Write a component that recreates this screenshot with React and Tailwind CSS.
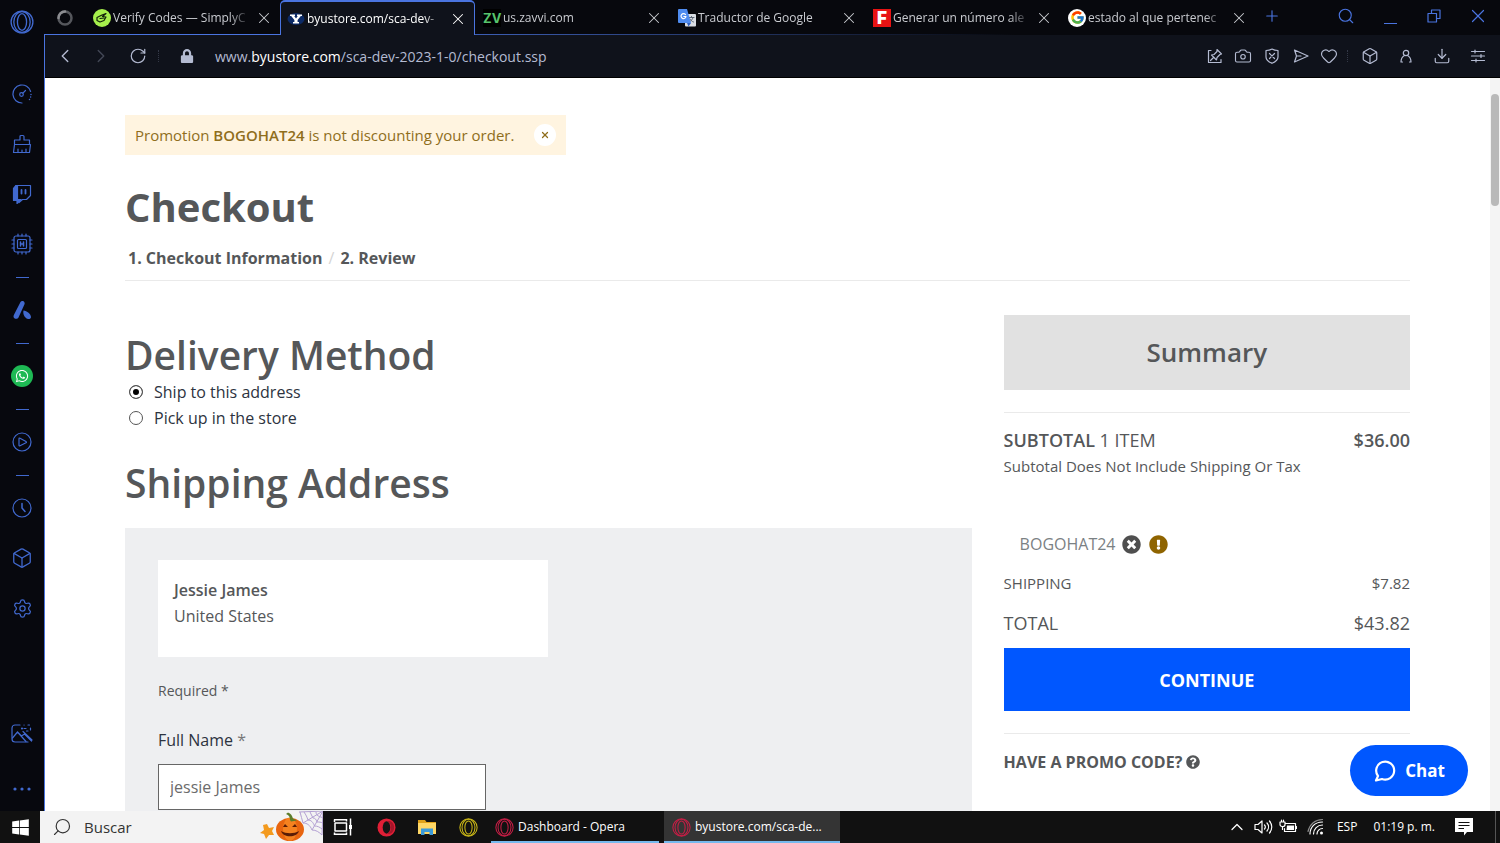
import { useState } from 'react'
import {
  Box, Camera, ChevronLeft, ChevronRight, ChevronUp, Download, Heart, Plus, RotateCw, Search, Settings, X,
} from 'lucide-react'
import { FaExclamationCircle, FaLock, FaQuestionCircle, FaTimesCircle, FaWhatsapp, FaWindows } from 'react-icons/fa'
import { FcGoogle } from 'react-icons/fc'

function Svg({ className = 'size-5', box = 20, children, ...rest }) {
  return (
    <svg
      className={className}
      viewBox={`0 0 ${box} ${box}`}
      fill="none"
      stroke="currentColor"
      strokeWidth="1.2"
      strokeLinecap="round"
      strokeLinejoin="round"
      aria-hidden="true"
      {...rest}
    >
      {children}
    </svg>
  )
}

function OperaRing({ className = 'size-[22px]' }) {
  return (
    <Svg className={className} box={22}>
      <circle cx="11" cy="11" r="10" />
      <ellipse cx="11" cy="11" rx="7.5" ry="9.6" />
      <ellipse cx="11" cy="11" rx="4.2" ry="7.6" />
    </Svg>
  )
}

function SpeedIcon() {
  return (
    <Svg>
      <path d="M10 19A9 9 0 1 1 18.6 7.5" />
      <path d="M19 10.5v.1M18.6 13v.1M17.5 15.4v.1" strokeWidth="1.5" />
      <circle cx="9.5" cy="10.5" r="1.8" />
      <path d="M10.9 9.2 13.5 6.5" />
    </Svg>
  )
}

function CleanerIcon() {
  return (
    <Svg>
      <path d="M8 6V2.5a1 1 0 0 1 1-1h2a1 1 0 0 1 1 1V6h5.5v4.5h-15V6zM2.5 10.5 1.5 18.5h16l1-8M6 18.5V15M10 18.5V16M14 18.5V15" />
    </Svg>
  )
}

function TwitchIcon() {
  return (
    <Svg>
      <path d="M4 1.5h14.5v10l-4 4h-4L7 18.5v-3H3.5V3z" />
      <path d="M4 1.5 1.5 4.5v12H5V19.5l4-4H5.500V1.500z" fill="currentColor" />
      <path d="M9.500 6v3.500M13.500 6v3.500" strokeWidth="1.8" />
    </Svg>
  )
}

function ChipIcon() {
  return (
    <Svg className="size-[22px]" box={22}>
      <rect x="3" y="3" width="16" height="16" rx="2" />
      <rect x="6.5" y="6.5" width="9" height="9" rx="1" />
      <path d="M9.5 9v4M12.5 9v4M9.5 11h3" strokeWidth="1.5" />
      <path d="M7 3V1M11 3V1M15 3V1M7 21v-2M11 21v-2M15 21v-2M3 7H1M3 11H1M3 15H1M21 7h-2M21 11h-2M21 15h-2" />
    </Svg>
  )
}

function AriaIcon() {
  return (
    <Svg stroke="none">
      <path d="M8.500 2c.8-1.400 3.300-1.200 4 .5.300.6.200 1.200-.1 1.900L6.500 17.500c-1 2.200-5 1.600-5-1 0-.7.300-1.300.6-1.900z" fill="currentColor" />
      <path d="M11.500 10.500c3.500.3 7.500 3.600 7.500 6.500 0 2-2.200 2.500-3.700 1.800-3-1.600-4.600-4.800-3.800-8.300z" fill="currentColor" />
    </Svg>
  )
}

function PlayerIcon() {
  return (
    <Svg>
      <circle cx="10" cy="10" r="9" />
      <path d="M7 6.7v6.6c0 .6.500.7 1 .5l6-3c.6-.3.600-1 0-1.300l-6-3.200c-.5-.2-1-.2-1 .4z" />
    </Svg>
  )
}

function HistoryIcon() {
  return (
    <Svg>
      <circle cx="10" cy="10" r="9" />
      <path d="M10 5.5V10l3 3.5" strokeWidth="1.5" />
    </Svg>
  )
}

function WallpaperIcon() {
  return (
    <Svg className="size-[22px]" box={22}>
      <path d="M9 2H4a3 3 0 0 0-3 3v11a3 3 0 0 0 3 3h13M13 2h.1M17 2h1.5M19.5 5v2" />
      <path d="m1.5 15 5-6 4 4 3-2 7 7M6.5 9 15 18.5M12 8.500l9 8.500M13 5.5h2M15.5 8h1.5" />
      <circle cx="11" cy="5.5" r=".5" />
    </Svg>
  )
}

function WhatsappBadge() {
  return (
    <span className="flex size-[22px] items-center justify-center rounded-full bg-[#1eb954] text-white">
      <FaWhatsapp className="size-[14px]" />
    </span>
  )
}

const sidebarItems = [
  { name: 'GX Control', icon: <SpeedIcon /> },
  { name: 'GX Cleaner', icon: <CleanerIcon /> },
  { name: 'Twitch', icon: <TwitchIcon /> },
  { name: 'Mods', icon: <ChipIcon /> },
  { divider: true },
  { name: 'Aria', icon: <AriaIcon /> },
  { divider: true },
  { name: 'WhatsApp', icon: <WhatsappBadge /> },
  { divider: true },
  { name: 'Player', icon: <PlayerIcon /> },
  { divider: true },
  { name: 'History', icon: <HistoryIcon /> },
  { name: 'Extensions', icon: <Box className="size-[22px]" strokeWidth={1.4} /> },
  { name: 'Settings', icon: <Settings className="size-[21px]" strokeWidth={1.4} /> },
]

function Sidebar() {
  return (
    <aside className="flex w-11 shrink-0 flex-col bg-[#07080e] text-[#4169cf]">
      <button className="flex h-11 items-center justify-center" type="button" aria-label="Opera">
        <OperaRing className="size-6" />
      </button>
      <nav className="flex flex-col pt-[25px]">
        {sidebarItems.map((item, index) =>
          item.divider ? (
            <span className="flex h-4 items-center justify-center" key={index}>
              <span className="h-px w-[13px] bg-[#4169cf]" />
            </span>
          ) : (
            <button className="flex h-[50px] items-center justify-center" type="button" key={item.name} aria-label={item.name}>
              {item.icon}
            </button>
          )
        )}
      </nav>
      <button className="mt-auto flex h-[50px] items-center justify-center" type="button" aria-label="Wallpaper">
        <WallpaperIcon />
      </button>
      <button className="mt-2 flex h-11 items-center justify-center" type="button" aria-label="More">
        <Svg stroke="none">
          <circle cx="3" cy="10" r="1.6" fill="currentColor" />
          <circle cx="10" cy="10" r="1.6" fill="currentColor" />
          <circle cx="17" cy="10" r="1.6" fill="currentColor" />
        </Svg>
      </button>
    </aside>
  )
}

function SimplyIcon() {
  return (
    <Svg className="size-[18px] shrink-0" box={18} stroke="#12210a">
      <circle cx="9" cy="9" r="9" fill="#a6f04c" stroke="none" />
      <path d="m4 8.5 5-2.5 4-1.5-3.5 3 3.500.5-2 3.5-4 1.5-3-1.5zM7 9.5l4-.5" />
    </Svg>
  )
}

function ByuIcon() {
  return (
    <Svg className="size-[18px] shrink-0" box={18} stroke="none">
      <ellipse cx="9" cy="9" rx="8.5" ry="6" fill="#0c2a66" />
      <path d="M3 4.5h5v1.6H7.2L9 8.5l1.8-2.4H10V4.5h5v1.6h-1.2L10.6 10v1.9H12v1.6H6v-1.6h1.4V10L4.2 6.1H3z" fill="#fff" />
    </Svg>
  )
}

function TranslateIcon() {
  return (
    <Svg className="size-[18px] shrink-0" box={18} stroke="none">
      <rect x="7" y="5" width="11" height="12.5" rx="1" fill="#d9dde3" />
      <path d="M11 8.5h5M13.5 7.5v1M15 8.5c-.5 2-2 3.5-3.5 4.5M12 10c.8 1.5 2 2.5 3.5 3" stroke="#5b6675" strokeWidth="1" />
      <path d="M1 0h8l4 14H1a1 1 0 0 1-1-1V1a1 1 0 0 1 1-1z" fill="#4f8cf0" />
      <path d="m9 14 4 0-2.500 3.500z" fill="#2f5fc0" />
      <path d="M7.5 5.5A2.5 2.5 0 1 0 8 7.5H5.8" stroke="#fff" strokeWidth="1.2" fill="none" />
    </Svg>
  )
}

const tabs = [
  { title: 'Verify Codes — SimplyC', icon: <SimplyIcon /> },
  { title: 'byustore.com/sca-dev-', icon: <ByuIcon />, active: true },
  {
    title: 'us.zavvi.com',
    icon: <b className="w-[18px] shrink-0 bg-black text-center font-['Inter',sans-serif] text-[13px] leading-[18px] text-[#57c46d]">ZV</b>,
  },
  { title: 'Traductor de Google', icon: <TranslateIcon /> },
  {
    title: 'Generar un número ale',
    icon: <b className="w-[18px] shrink-0 bg-[#e81313] text-center font-['Inter',sans-serif] text-[17px] leading-[18px] font-black text-white">F</b>,
  },
  {
    title: 'estado al que pertenec',
    icon: (
      <span className="flex size-[18px] shrink-0 items-center justify-center rounded-full bg-white">
        <FcGoogle className="size-[15px]" />
      </span>
    ),
  },
]

function Tab({ tab }) {
  return (
    <div
      className={
        tab.active
          ? 'relative z-10 flex h-full min-w-0 basis-[195px] items-center gap-[2px] rounded-t-[5px] border-x border-t-2 border-[#4a74e0] bg-[#0f121b] pr-1 pl-[6px] text-white'
          : 'flex h-full min-w-0 basis-[195px] items-center gap-[2px] pr-1 pl-2 text-[#c9cbd0]'
      }
    >
      {tab.icon}
      <button
        className="min-w-0 flex-1 overflow-hidden mask-r-from-85% text-left text-[12px] leading-[18px] whitespace-nowrap"
        type="button"
      >
        {tab.title}
      </button>
      <button className="flex size-6 shrink-0 items-center justify-center" type="button" aria-label={`Close ${tab.title}`}>
        <X className="size-[18px]" strokeWidth={1.4} />
      </button>
    </div>
  )
}

function TabBar() {
  return (
    <div className="relative flex h-[35px] shrink-0 items-center bg-[#07080d]">
      <div className="absolute bottom-0 left-0 h-px w-2/3 bg-linear-to-r from-[#4a74e0] from-30% to-transparent" />
      <button className="flex w-[41px] shrink-0 items-center justify-center text-[#55575c]" type="button" aria-label="Loading tab">
        <Svg className="size-4" box={16} strokeWidth="2.5">
          <circle cx="8" cy="8" r="6.5" />
          <path d="M8 1.5a6.5 6.5 0 0 0-6.5 6.5" stroke="#8b8c90" />
        </Svg>
      </button>
      {tabs.map((tab) => (
        <Tab key={tab.title} tab={tab} />
      ))}
      <button className="ml-2 shrink-0 pb-1 text-[#4a74e0]" type="button" aria-label="New tab">
        <Plus className="size-[18px]" strokeWidth={1.5} />
      </button>
      <div className="ml-auto flex shrink-0 items-center pb-1 text-[#4a74e0]">
        <button className="flex w-11 justify-center" type="button" aria-label="Search tabs">
          <Search className="size-[18px]" strokeWidth={1.5} />
        </button>
        <button className="flex h-4 w-11 items-end justify-center" type="button" aria-label="Minimize">
          <span className="h-px w-[13px] bg-current" />
        </button>
        <button className="flex w-11 justify-center" type="button" aria-label="Restore">
          <Svg className="size-4" box={16}>
            <path d="M2 5.5h8.5V14H2zM5.5 5.5V2H14v8.500h-3.500" />
          </Svg>
        </button>
        <button className="flex w-11 justify-center" type="button" aria-label="Close window">
          <X className="size-[22px]" strokeWidth={1.3} />
        </button>
      </div>
    </div>
  )
}

function AddressBar() {
  return (
    <div className="flex h-[43px] shrink-0 items-center border-b border-black bg-[#0f121b] pr-1 pl-2 text-[#b4bbd2]">
      <button className="flex w-6 justify-center" type="button" aria-label="Back">
        <ChevronLeft className="size-[22px]" strokeWidth={1.5} />
      </button>
      <button className="ml-3 flex w-6 justify-center text-[#434857]" type="button" aria-label="Forward">
        <ChevronRight className="size-[22px]" strokeWidth={1.5} />
      </button>
      <button className="ml-[13px] flex w-6 justify-center" type="button" aria-label="Reload">
        <RotateCw className="size-[18px]" strokeWidth={1.6} />
      </button>
      <span className="ml-2 h-3 border-l border-dotted border-[#333847]" />
      <button className="ml-[18px] flex w-5 justify-center" type="button" aria-label="Site information">
        <FaLock className="size-[14px]" />
      </button>
      <button className="ml-[14px] min-w-0 flex-1 truncate px-1 text-left text-[14px]" type="button" aria-label="Edit address">
        www.<span className="text-white">byustore.com</span>/sca-dev-2023-1-0/checkout.ssp
      </button>
      <div className="flex shrink-0 items-center">
        <button className="flex w-7 justify-center" type="button" aria-label="Edit page">
          <Svg className="size-4" box={16}>
            <path d="M4 2.500H1.500v12h12.500v-3M10 1.500l4.500 4.500-1.500.5-3 3-.5 2.500-5-5 2.500-.5 3-3zM6.500 9.500 3.500 12.500" />
          </Svg>
        </button>
        <button className="flex w-7 justify-center" type="button" aria-label="Snapshot">
          <Camera className="size-[18px]" strokeWidth={1.5} />
        </button>
        <button className="flex w-[30px] justify-center" type="button" aria-label="Ad blocker">
          <Svg className="size-4" box={16}>
            <path d="M8 1c2 1.200 4 1.500 6 1.500V9c0 3-3 5-6 6.300C5 14 2 12 2 9V2.500C4 2.500 6 2.200 8 1zM5.500 5.500l5 5M10.500 5.500l-5 5" />
          </Svg>
        </button>
        <button className="flex w-7 justify-center" type="button" aria-label="Send page">
          <Svg className="size-4" box={16}>
            <path d="m1.500 2 13.500 6L1.500 14l2-6zM3.500 8H8" />
          </Svg>
        </button>
        <button className="flex w-7 justify-center" type="button" aria-label="Bookmark">
          <Heart className="size-[18px]" strokeWidth={1.5} />
        </button>
        <span className="ml-1 h-3 border-l border-dotted border-[#333847]" />
        <button className="ml-1 flex w-9 justify-center" type="button" aria-label="Extensions">
          <Box className="size-[18px]" strokeWidth={1.6} />
        </button>
        <button className="flex w-9 justify-center" type="button" aria-label="Profile">
          <Svg className="size-4" box={16}>
            <circle cx="8" cy="5" r="2.7" />
            <path d="M3 14c0-3 1.500-5.500 3.500-6.500M13 14c0-3-1.500-5.500-3.500-6.500M3 14h1.500M11.500 14H13" />
          </Svg>
        </button>
        <button className="flex w-9 justify-center" type="button" aria-label="Downloads">
          <Download className="size-[18px]" strokeWidth={1.6} />
        </button>
        <button className="flex w-9 justify-center" type="button" aria-label="Easy setup">
          <Svg className="size-4" box={16}>
            <path d="M1.500 3.500h13M1.500 8h13M1.500 12.500h13M5 2v3M11 6.500v3M6 11v3" />
          </Svg>
        </button>
      </div>
    </div>
  )
}

function DeliveryOption({ value, label, selected, onSelect }) {
  return (
    <label className="flex h-[26px] items-center gap-[11px] pl-1 text-base text-[#2d3340]">
      <input
        className="size-[14px] appearance-none rounded-full border border-[#555] bg-white checked:bg-black checked:shadow-[inset_0_0_0_3px_white]"
        type="radio"
        name="delivery"
        value={value}
        checked={selected === value}
        onChange={() => onSelect(value)}
      />
      {label}
    </label>
  )
}

function ShippingForm() {
  const [delivery, setDelivery] = useState('ship')

  return (
    <section>
      <h2 className="mt-4 text-[39px] leading-[48px] font-semibold">Delivery Method</h2>
      <DeliveryOption value="ship" label="Ship to this address" selected={delivery} onSelect={setDelivery} />
      <DeliveryOption value="pickup" label="Pick up in the store" selected={delivery} onSelect={setDelivery} />
      <h2 className="mt-7 text-[39px] leading-[48px] font-semibold">Shipping Address</h2>

      <div className="mt-[21px] bg-[#eeeff1] px-[33px] py-8">
        <div className="h-[97px] w-1/2 bg-white px-4 py-[17px] text-base leading-[26px]">
          <p className="font-semibold">Jessie James</p>
          <p>United States</p>
        </div>
        <p className="mt-6 text-[14px] leading-5">Required *</p>
        <label className="mt-[27px] block text-base leading-6 text-[#2d3340]" htmlFor="full-name">
          Full Name <span className="text-[#777]">*</span>
        </label>
        <input
          className="mt-3 h-[46px] w-[42%] border border-[#666] bg-white px-[11px] text-base text-[#6b6b6b] outline-none"
          id="full-name"
          type="text"
          defaultValue="jessie James"
        />
      </div>
    </section>
  )
}

function OrderSummary() {
  return (
    <section>
      <h3 className="bg-[#e1e1e1] text-center text-[26px] leading-[75px] font-semibold">Summary</h3>
      <hr className="mt-[22px] border-[#eaeaea]" />
      <p className="mt-[14px] flex justify-between text-lg leading-[26px]">
        <span>
          <span className="font-semibold">SUBTOTAL</span> 1 ITEM
        </span>
        <span className="font-semibold">$36.00</span>
      </p>
      <p className="text-[15px] leading-[26px]">Subtotal Does Not Include Shipping Or Tax</p>
      <p className="mt-[52px] flex items-center gap-[6px] pl-4 leading-[26px] text-[#7b8184]">
        BOGOHAT24
        <button className="text-[#4f4f4f]" type="button" aria-label="Remove promo code">
          <FaTimesCircle className="size-[19px]" />
        </button>
        <FaExclamationCircle className="ml-[2px] size-[19px] text-[#8f6400]" />
      </p>
      <p className="mt-[13px] flex justify-between text-[15px] leading-[26px]">
        <span>SHIPPING</span>
        <span>$7.82</span>
      </p>
      <p className="mt-[14px] flex justify-between text-lg leading-[26px]">
        <span>TOTAL</span>
        <span>$43.82</span>
      </p>
      <button className="mt-3 block h-[63px] w-full bg-[#0057ff] text-lg font-bold text-white" type="button">
        CONTINUE
      </button>
      <hr className="mt-[22px] border-[#eaeaea]" />
      <button className="mt-[15px] flex items-center gap-1 leading-[26px] font-bold" type="button">
        HAVE A PROMO CODE?
        <FaQuestionCircle className="size-[14px]" />
      </button>
    </section>
  )
}

function CheckoutPage() {
  const [showAlert, setShowAlert] = useState(true)

  return (
    <main className="flex min-h-0 flex-1 bg-white text-[#555759]">
      <div className="min-w-0 flex-1 overflow-hidden px-20 pt-[37px]">
        {showAlert && (
          <div className="flex h-10 w-fit items-center gap-5 bg-[#fff4e0] px-[10px] text-[15px] text-[#8f6e1c]">
            <p>
              Promotion <span className="font-semibold">BOGOHAT24</span> is not discounting your order.
            </p>
            <button
              className="flex size-[22px] items-center justify-center rounded-full bg-white"
              type="button"
              aria-label="Dismiss"
              onClick={() => setShowAlert(false)}
            >
              <X className="size-[10px]" strokeWidth={3} />
            </button>
          </div>
        )}
        <h1 className="mt-[26px] text-[40px] leading-[52px] font-bold">Checkout</h1>
        <nav className="mt-3 flex gap-[6px] border-b border-[#eaeaea] pb-[9px] pl-[3px] text-base leading-[26px] font-bold">
          <a href="#information">1. Checkout Information</a>
          <span className="font-normal text-[#d5d5d5]">/</span>
          <a href="#review">2. Review</a>
        </nav>
        <div className="mt-[34px] grid grid-cols-[25fr_12fr] items-start gap-8">
          <ShippingForm />
          <OrderSummary />
        </div>
      </div>
      <div className="w-[10px] shrink-0 bg-[#f4f4f4] px-px pt-4">
        <div className="h-[112px] rounded-full bg-[#b9b9b9]" />
      </div>
    </main>
  )
}

function ChatButton() {
  return (
    <button
      className="absolute right-8 bottom-[15px] flex h-[51px] w-[118px] items-center justify-center gap-2 rounded-full bg-[#0057ff] text-[17px] font-bold text-white"
      type="button"
    >
      <Svg className="size-6" box={24} strokeWidth="2.2">
        <path d="M3 21.500 5 17a9 9 0 1 1 4 3z" />
      </Svg>
      Chat
    </button>
  )
}

function Halloween() {
  return (
    <svg className="h-8 w-[66px] shrink-0" viewBox="0 0 66 32" aria-hidden="true">
      <g fill="none" stroke="#b3a0d3" strokeWidth="1">
        <path d="M66 0 42 1M66 0 46 12M66 0 55 19M66 0l-1 24M47 1c2 3 3 5 4 8 3 0 5 2 6.500 6 3 0 5 1 7.500 3M53 1c1 2 2 4 3 6 2 0 3 1 4 4 2 0 4 0 5.500 1M59 1c0 2 1 3 2 4 1 0 2 1 4.500 1.500M43 1c1 4 2 7 3 11 4 0 7 2 9 7 4 0 7 2 10 5" />
      </g>
      <path d="m10 13 2 4 5-1-2 4 2 4-5 0-3 4-2-5-4-1 4-3-1-5z" fill="#f39a1e" />
      <ellipse cx="33" cy="18.5" rx="14" ry="11.5" fill="#e8650f" />
      <ellipse cx="33" cy="18" rx="7" ry="11.5" fill="#f5821f" />
      <path d="M33 9c0-3-1-5-4-6l2-1.500c3 1 4 3 5 6l4 2-6 1z" fill="#5c7d2a" />
      <path d="m26 16 2-3 3 3zM35 16l3-3 2 3zM24 20c5 3 13 3 18 0-2 7-16 7-18 0z" fill="#5a1c06" />
    </svg>
  )
}

function TaskWindow({ title, active }) {
  return (
    <button
      className={
        active
          ? 'ml-[5px] flex h-full w-[176px] items-center gap-1 border-b-2 border-[#76b9ed] bg-[#343434] pt-[2px] pl-2'
          : 'flex h-full w-[168px] items-center gap-1 border-b-2 border-[#76b9ed] pt-[2px] pl-1'
      }
      type="button"
    >
      <OperaRing className="size-[19px] text-[#c41e45]" />
      {title}
    </button>
  )
}

function Taskbar() {
  return (
    <footer className="flex h-8 shrink-0 items-center bg-[#111111] text-xs text-white">
      <button className="flex w-10 justify-center" type="button" aria-label="Start">
        <FaWindows className="size-[19px]" />
      </button>
      <label className="flex h-full w-[283px] items-center bg-[#f3f3f3] pl-3 text-[#333]">
        <Search className="size-5 -scale-x-100" strokeWidth={1.4} aria-hidden="true" />
        <input
          className="ml-3 min-w-0 flex-1 bg-transparent text-[15px] text-[#333] outline-none placeholder:text-[#333]"
          type="search"
          placeholder="Buscar"
          aria-label="Buscar"
        />
        <Halloween />
      </label>
      <button className="flex w-10 justify-center" type="button" aria-label="Task view">
        <Svg strokeLinecap="butt" strokeWidth="1.5">
          <path d="M1.500 5V2.500M1 2.800h13M13.500 2v2.500M2 6h11.500v8H2zM1.500 18v-2.500M1 17.300h13M13.500 18v-2.500M17.500 1.500v17" />
          <path d="M16 8h3v4h-3z" fill="currentColor" stroke="none" />
        </Svg>
      </button>
      <button className="flex w-[46px] justify-center" type="button" aria-label="Opera">
        <svg className="size-[19px]" viewBox="0 0 20 20" aria-hidden="true">
          <circle cx="10" cy="10" r="9.5" fill="#e01f36" />
          <path d="M11 3.600c5 1 5 12 0 12.900 3 1.200 7-1.500 7-6.500s-4-8-7-6.400z" fill="#a5152a" />
          <ellipse cx="10" cy="10" rx="4" ry="6.5" fill="#151515" />
        </svg>
      </button>
      <button className="flex w-9 justify-center" type="button" aria-label="File explorer">
        <svg className="h-4 w-[18px]" viewBox="0 0 18 16" aria-hidden="true">
          <path d="M0 1h7l1.500 2H18v3H0z" fill="#e0a21a" />
          <path d="M0 4h18v11H0z" fill="#ffd766" />
          <path d="M3 16V9.500h12V16h-3.500v-3h-5v3z" fill="#3c9ad8" />
        </svg>
      </button>
      <button className="flex w-[46px] justify-center text-[#c9b617]" type="button" aria-label="Opera GX">
        <OperaRing className="size-[19px]" />
      </button>
      <div className="flex h-full">
        <TaskWindow title="Dashboard - Opera" />
        <TaskWindow title="byustore.com/sca-de..." active />
      </div>
      <div className="ml-auto flex h-full items-center">
        <button type="button" aria-label="Show hidden icons">
          <ChevronUp className="size-5" strokeWidth={1.5} />
        </button>
        <Svg className="ml-[6px] size-5" box={20}>
          <path d="M2 7.500h3L9 4v12l-4-3.500H2zM11.500 8c1 1.200 1 2.800 0 4M14 6c2 2.300 2 5.700 0 8M16.500 4c3 3.400 3 8.600 0 12" />
        </Svg>
        <Svg className="ml-[6px] size-[18px]" box={18}>
          <path d="M6 5.500h10.500v8H5.500v-3M17.500 8.500v2M1 4h5v2.500a2 2 0 0 1-2 2H3a2 2 0 0 1-2-2zM2.500 4V2M4.500 4V2M3.500 8.500v3" />
          <path d="M8 7.500h7v4.500H7.500z" fill="currentColor" stroke="none" />
        </Svg>
        <Svg className="ml-[10px] size-[18px]" box={18}>
          <path d="M3 16C3 9 8 4 15.500 4M6.500 16c0-5 4-9 9-9M10 16c0-3 2.500-5.500 5.500-5.500" />
          <path d="M1 13.500C2.500 7 7.500 2 15.500 1.500" stroke="#8a8a8a" />
          <circle cx="14.500" cy="15" r="1.500" fill="currentColor" stroke="none" />
        </Svg>
        <span className="ml-3">ESP</span>
        <time className="ml-4">01:19 p. m.</time>
        <button className="ml-5" type="button" aria-label="Notifications">
          <svg className="size-[18px]" viewBox="0 0 18 18" aria-hidden="true">
            <path d="M0 0h18v14h-6l-3 3.500V14H0z" fill="#fff" />
            <path d="M3.500 4.500h11M3.500 7.500h11M3.500 10.500H9" stroke="#111" strokeWidth="1.2" />
          </svg>
        </button>
        <span className="mr-1 ml-[22px] h-full border-l border-[#555]" />
      </div>
    </footer>
  )
}

function App() {
  return (
    <div className="flex h-screen flex-col overflow-hidden font-['Open_Sans',sans-serif]">
      <div className="flex min-h-0 flex-1">
        <Sidebar />
        <div className="relative flex min-w-0 flex-1 flex-col">
          <TabBar />
          <div className="flex min-h-0 flex-1 flex-col border-l border-[#4a74e0]">
            <AddressBar />
            <CheckoutPage />
          </div>
          <ChatButton />
        </div>
      </div>
      <Taskbar />
    </div>
  )
}

export default App
